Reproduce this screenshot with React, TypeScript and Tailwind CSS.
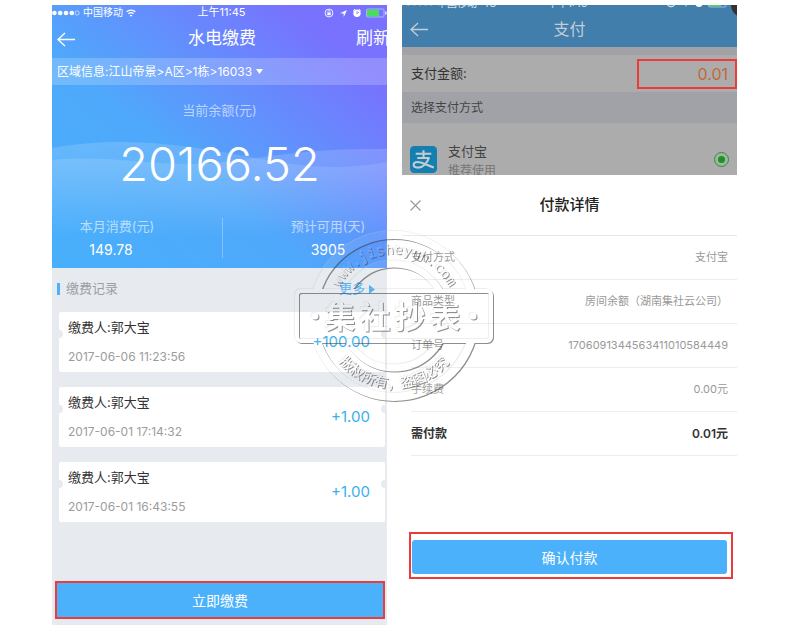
import type { ReactNode } from "react"

const records = [
  { payer: "郭大宝", time: "2017-06-06 11:23:56", amount: "+100.00" },
  { payer: "郭大宝", time: "2017-06-01 17:14:32", amount: "+1.00" },
  { payer: "郭大宝", time: "2017-06-01 16:43:55", amount: "+1.00" },
]

const details = [
  { label: "支付方式", value: "支付宝" },
  { label: "商品类型", value: "房间余额（湖南集社云公司）" },
  { label: "订单号", value: "1706091344563411010584449" },
  { label: "手续费", value: "0.00元" },
]

function BackArrow() {
  return (
    <svg className="h-4 w-[18px]" viewBox="0 0 18 16" fill="none" stroke="currentColor" strokeWidth="1.3">
      <path d="M8 2 1 8.5l7 6.5M1 8.5h17" />
    </svg>
  )
}

function StatusIcons() {
  return (
    <svg className="h-[10px] w-[63px]" viewBox="0 0 63 10" fill="none">
      <circle cx="5" cy="5" r="3.9" stroke="#fff" strokeWidth="0.9" />
      <path d="M3.3 4.5h3.4v2.7H3.3z" fill="#fff" />
      <path d="M3.9 4.6V3.6a1.1 1.1 0 0 1 2.2 0v1" stroke="#fff" strokeWidth="0.7" />
      <path d="M16 5.2 23 2l-3.2 7-.3-3.6z" fill="#fff" />
      <circle cx="33" cy="5.3" r="3.7" fill="#fff" />
      <path d="m29.3 2.7 1.6-1.5M36.7 2.7l-1.6-1.5" stroke="#fff" />
      <path d="M33 5.6V3.2M33 5.6l2-1.4" stroke="#6a86ff" strokeWidth="0.8" />
      <rect x="42.5" y="1" width="17.5" height="8" rx="1" stroke="#b9c4ff" strokeWidth="0.8" />
      <rect x="43" y="1.5" width="12" height="7" fill="#4cd964" />
      <path d="M61.8 3.5v3" stroke="#fff" strokeWidth="1.2" />
    </svg>
  )
}

function Signal({ empty }: { empty?: boolean }) {
  return (
    <svg className="h-[6px] w-[28px]" viewBox="0 0 29 6" fill="#fff">
      <circle cx="2.5" cy="3" r="2.4" />
      <circle cx="8.5" cy="3" r="2.4" />
      <circle cx="14.5" cy="3" r="2.4" />
      <circle cx="20.5" cy="3" r="2.4" />
      <circle cx="26" cy="3" r="2.2" fill={empty ? "none" : "#fff"} stroke="#fff" strokeWidth="0.6" />
    </svg>
  )
}

function Wifi() {
  return (
    <svg className="h-2 w-[10px]" viewBox="0 0 10 8" fill="none" stroke="#fff" strokeWidth="1.3">
      <path d="M.6 2.8a6.4 6.4 0 0 1 8.8 0M2.4 4.8a3.8 3.8 0 0 1 5.2 0" />
      <path d="M5 7.8 3.7 6.4a1.9 1.9 0 0 1 2.6 0z" fill="#fff" stroke="none" />
    </svg>
  )
}

function Waves() {
  return (
    <svg className="absolute inset-x-0 bottom-0 h-[128px] w-full" viewBox="0 0 335 128" preserveAspectRatio="none">
      <defs>
        <linearGradient id="wave" x1="0" y1="0" x2="0" y2="1">
          <stop offset="0" stopColor="#fff" stopOpacity="0.15" />
          <stop offset="0.75" stopColor="#fff" stopOpacity="0" />
        </linearGradient>
      </defs>
      <path d="M0 8C60-3 115 3 165 11s100 24 170 11v106H0z" fill="url(#wave)" />
      <path d="M0 20c50-5 90 4 140 4s90-16 195-15v119H0z" fill="url(#wave)" />
    </svg>
  )
}

function Stat({ label, children }: { label: string; children: ReactNode }) {
  return (
    <div className="w-[130px] text-center">
      <dt className="text-[13px] leading-4 text-white/60">{label}</dt>
      <dd className="mt-2 text-[14px] leading-4">{children}</dd>
    </div>
  )
}

function BalanceScreen() {
  return (
    <section className="flex flex-col overflow-hidden bg-[#e7ebef]">
      <div className="relative overflow-hidden bg-[linear-gradient(40deg,#48b0fb_0%,#4fa8fb_40%,#6290fd_60%,#7872fe_85%)] text-white">
        <Waves />
        <div className="relative">
          <div className="flex h-[15px] items-center text-[10px]">
            <div className="flex flex-1 items-center gap-[3px]">
              <Signal empty />
              中国移动
              <Wifi />
            </div>
            <span className="pl-1 text-[11px]">上午11:45</span>
            <div className="flex flex-1 justify-end">
              <StatusIcons />
            </div>
          </div>
          <header className="flex h-[38px] items-center">
            <div className="flex flex-1 pl-[5px]">
              <button type="button" aria-label="返回">
                <BackArrow />
              </button>
            </div>
            <h1 className="text-[17px]">水电缴费</h1>
            <div className="flex flex-1 justify-end">
              <button type="button" className="-mr-[3px] text-[17px]">刷新</button>
            </div>
          </header>
          <button type="button" className="flex h-[27px] w-full items-center gap-1 bg-white/20 pl-[5px] text-[12px]">
            区域信息:江山帝景&gt;A区&gt;1栋&gt;16033
            <svg className="h-[5px] w-[7px]" viewBox="0 0 7 5" fill="#fff">
              <path d="M0 0h7L3.5 5z" />
            </svg>
          </button>
          <div className="pt-[15px] text-center">
            <p className="text-[13px] leading-5 text-white/60">当前余额(元)</p>
            <p className="mt-5 text-[47px] leading-[48px] font-light">20166.52</p>
          </div>
          <dl className="mt-[30px] flex items-center justify-between pb-[10px]">
            <Stat label="本月消费(元)">
              <span className="pr-3">149.78</span>
            </Stat>
            <div className="h-10 w-px bg-white/30" />
            <div className="-mr-[6px]">
              <Stat label="预计可用(天)">3905</Stat>
            </div>
          </dl>
        </div>
      </div>

      <div className="flex h-11 items-center pr-3 pb-[2px] pl-[5px] text-[13px]">
        <span className="h-3 w-[3px] bg-[#4bb1fb]" />
        <h2 className="flex-1 pl-[6px] text-[#9b9fa3]">缴费记录</h2>
        <a href="#records" className="flex items-center gap-1 text-[#45aef5]">
          更多
          <svg className="h-[9px] w-[6px]" viewBox="0 0 6 9" fill="currentColor">
            <path d="M0 0v9l6-4.5z" />
          </svg>
        </a>
      </div>

      <ul id="records" className="flex flex-col gap-[15px] pr-[2px] pl-[7px]">
        {records.map((record) => (
          <li key={record.time} className="relative flex items-center justify-between rounded-[2px] bg-white py-[7px] pr-[15px] pl-[9px]">
            <span className="absolute top-[18px] -left-1 size-2 rounded-full bg-[#e7ebef]" />
            <span className="absolute top-[18px] -right-1 size-2 rounded-full bg-[#e7ebef]" />
            <div>
              <p className="text-[13px] leading-4 text-[#333]">缴费人:{record.payer}</p>
              <p className="mt-[14px] text-[12px] leading-4 text-[#9c9c9c]">{record.time}</p>
            </div>
            <span className="text-[15px] leading-5 text-[#39b0ee]">{record.amount}</span>
          </li>
        ))}
      </ul>

      <div className="mt-auto pt-[50px] pr-[2px] pb-[6px] pl-[3px]">
        <button type="button" className="h-[38px] w-full border-2 border-[#ec3b3b] bg-[#4bb1fb] text-[14px] text-white">
          立即缴费
        </button>
      </div>
    </section>
  )
}

function AlipayLogo() {
  return (
    <svg className="size-[27px]" viewBox="0 0 26 26" fill="none">
      <rect width="26" height="26" rx="4" fill="#167fb2" />
      <g stroke="#c3cdd2" strokeWidth="2">
        <path d="M5.5 7.5h15M13 4v7.5M7 11.5h11.8" />
        <path d="M18.2 11.5C16.5 16.5 12.5 20.8 7.8 20.8c-2.8 0-4.3-1.1-4.3-2.7s1.6-2.7 3.9-2.7c4.2 0 8.6 3.4 15.6 5.2" />
      </g>
    </svg>
  )
}

function DetailRow({ label, children }: { label: string; children: ReactNode }) {
  return (
    <div className="flex h-11 items-center justify-between border-b border-[#ededed] pr-[9px]">
      <dt>{label}</dt>
      <dd>{children}</dd>
    </div>
  )
}

function PaymentScreen() {
  return (
    <section className="flex flex-col overflow-hidden bg-white">
      <div className="h-[170px] overflow-hidden bg-[#acacac]">
        <div className="relative h-[42px] overflow-hidden bg-[#417eac] text-[#c3cdd6]">
          <div className="-mt-[9px] flex h-[14px] items-center text-[10px] text-white/80">
            <div className="flex flex-1 items-center gap-[3px] pl-1">
              <Signal />
              中国移动&nbsp; 4G
            </div>
            <span>下午1:46</span>
            <div className="flex flex-1 justify-end pr-2">
              <StatusIcons />
            </div>
          </div>
          <span className="absolute -top-3 -right-[18px] size-6 rounded-full bg-[#333]" />
          <header className="flex h-[38px] items-center">
            <div className="flex flex-1">
              <button type="button" aria-label="返回" className="ml-2">
                <BackArrow />
              </button>
            </div>
            <h1 className="text-[16px]">支付</h1>
            <div className="flex-1" />
          </header>
        </div>
        <div className="h-2 bg-[#a0a2a8]" />
        <div className="flex h-[37px] items-center justify-between pl-[9px]">
          <label htmlFor="amount" className="text-[13px] text-[#333]">支付金额:</label>
          <input
            id="amount"
            defaultValue="0.01"
            className="h-[30px] w-[100px] border-2 border-[#ec3b3b] pr-[7px] text-right text-[16px] text-[#c0693a]"
          />
        </div>
        <h2 className="flex h-[31px] items-center bg-[#a0a2a8] pl-[9px] text-[12px] text-[#444]">选择支付方式</h2>
        <label className="flex items-start pt-[18px] pr-2 pl-2">
          <span className="pt-[5px]">
            <AlipayLogo />
          </span>
          <span className="flex-1 pt-px pl-[11px] text-[13px] leading-[19px] text-[#444]">
            支付宝
            <span className="block text-[12px] text-[#777]">推荐使用</span>
          </span>
          <input
            type="radio"
            name="method"
            defaultChecked
            className="mt-[11px] size-[15px] appearance-none rounded-full border border-[#1f9a2c] bg-[#119a1e] bg-clip-content p-[3px]"
          />
        </label>
      </div>

      <div className="flex h-[61px] items-center border-b border-[#e4e8ee] text-[#222]">
        <div className="flex flex-1">
          <button type="button" aria-label="关闭" className="ml-2">
            <svg className="size-[11px]" viewBox="0 0 11 11" stroke="#999" strokeWidth="1.1">
              <path d="m.5.5 10 10M10.5.5l-10 10" />
            </svg>
          </button>
        </div>
        <h2 className="text-[15px] font-medium">付款详情</h2>
        <div className="flex-1" />
      </div>

      <dl className="pl-[9px] text-[11px] text-[#999]">
        {details.map((detail) => (
          <DetailRow key={detail.label} label={detail.label}>
            {detail.value}
          </DetailRow>
        ))}
        <div className="text-[12px] font-semibold text-[#333]">
          <DetailRow label="需付款">0.01元</DetailRow>
        </div>
      </dl>

      <div className="mt-[76px] mr-1 ml-[7px] border-2 border-[#ec3b3b] pt-[6px] pr-1 pb-[3px] pl-px">
        <button type="button" className="h-[34px] w-full rounded-[3px] bg-[#4bb1fb] text-[14px] text-white">
          确认付款
        </button>
      </div>
    </section>
  )
}

// Company seal, drawn as an embossed outline over both screens
function Seal() {
  return (
    <svg
      className="pointer-events-none absolute top-[220px] left-1/2 h-[182px] w-[210px] -translate-x-1/2"
      viewBox="-104 -91 210 182"
      role="img"
      aria-label="集社抄表"
    >
      <defs>
        <filter id="emboss" x="-5%" y="-5%" width="110%" height="110%" colorInterpolationFilters="sRGB">
          <feOffset in="SourceAlpha" dx="1" dy="1" result="down" />
          <feComposite in="down" in2="SourceAlpha" operator="out" result="darkEdge" />
          <feFlood floodColor="#444" floodOpacity="0.6" />
          <feComposite in2="darkEdge" operator="in" result="dark" />
          <feOffset in="SourceAlpha" dx="-1" dy="-1" result="up" />
          <feComposite in="up" in2="SourceAlpha" operator="out" result="lightEdge" />
          <feFlood floodColor="#c8c8c8" floodOpacity="0.3" />
          <feComposite in2="lightEdge" operator="in" result="light" />
          <feFlood floodColor="#fff" floodOpacity="0.08" />
          <feComposite in2="SourceAlpha" operator="in" result="face" />
          <feMerge>
            <feMergeNode in="face" />
            <feMergeNode in="light" />
            <feMergeNode in="dark" />
          </feMerge>
        </filter>
        <clipPath id="outside">
          <path d="M-105-91h210v64h-210zM-105 27h210v64h-210z" />
        </clipPath>
        <path id="topArc" d="M-62 0A62 62 0 0 1 62 0" />
        <path id="bottomArc" d="M-72 0A72 72 0 0 0 72 0" />
      </defs>
      <g filter="url(#emboss)">
        <g clipPath="url(#outside)" fill="none" stroke="#000">
          <circle r="81" strokeWidth="8" />
          <circle r="52" strokeWidth="7" />
        </g>
        <rect x="-97" y="-25" width="194" height="50" rx="4" fill="none" stroke="#000" strokeWidth="4" />
        <circle cx="-79" cy="0" r="3.5" />
        <circle cx="79" cy="0" r="3.5" />
        <g textAnchor="middle">
          {["集", "社", "抄", "表"].map((char, i) => (
            <text key={char} x={-54 + i * 35} y="12" fontSize="31" fontWeight="700">{char}</text>
          ))}
          <text fontSize="14" fontFamily="DejaVu Sans Mono, monospace">
            <textPath href="#topArc" startOffset="50%">www.jisheyun.com</textPath>
          </text>
          <text fontSize="14" fontWeight="500">
            <textPath href="#bottomArc" startOffset="50%">版权所有，盗图必究</textPath>
          </text>
        </g>
      </g>
    </svg>
  )
}

export default function App() {
  return (
    <div className="bg-white pt-[5px] pr-[63px] pb-[3px] pl-[52px] font-['Inter','Noto_Sans_CJK_SC',sans-serif]">
      <main className="relative grid min-h-[620px] grid-cols-2 gap-[15px]">
        <BalanceScreen />
        <PaymentScreen />
        <Seal />
      </main>
    </div>
  )
}
